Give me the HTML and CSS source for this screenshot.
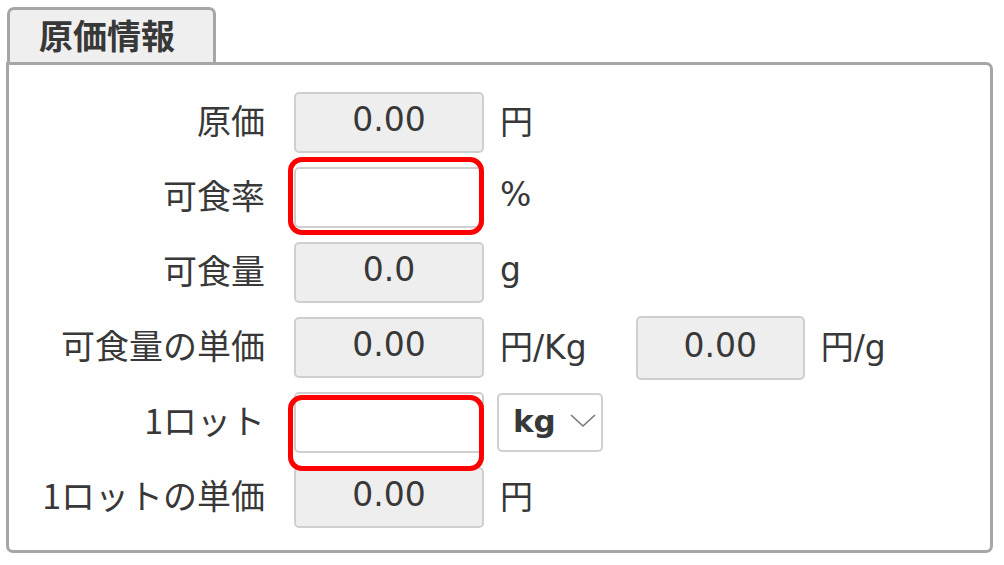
FILE: index.html
```html
<!DOCTYPE html>
<html lang="ja">
<head>
  <meta charset="UTF-8" />
  <title>原価情報</title>
  <link rel="stylesheet" href="styles.css">
</head>
<body>

  <div class="section">
    <div class="tab">原価情報</div>

    <div class="panel">
      <div class="row">
        <div class="label">原価</div>
        <div class="field readonly">0.00</div>
        <div class="unit">円</div>
      </div>

      <div class="row">
        <div class="label">可食率</div>
        <div class="field mark mark-a"></div>
        <div class="unit">%</div>
      </div>

      <div class="row">
        <div class="label">可食量</div>
        <div class="field readonly">0.0</div>
        <div class="unit">g</div>
      </div>

      <div class="row">
        <div class="label">可食量の単価</div>
        <div class="field readonly">0.00</div>
        <div class="unit">円/Kg</div>
        <div class="field readonly second">0.00</div>
        <div class="unit">円/g</div>
      </div>

      <div class="row">
        <div class="label">1ロット</div>
        <div class="field mark mark-b"></div>
        <div class="select">
          <span>kg</span>
          <svg width="26" height="14" viewBox="0 0 26 14">
            <polyline points="1,1 13,12 25,1" fill="none" stroke="#777" stroke-width="1.6"/>
          </svg>
        </div>
      </div>

      <div class="row">
        <div class="label">1ロットの単価</div>
        <div class="field readonly">0.00</div>
        <div class="unit">円</div>
      </div>
    </div>
  </div>

</body>
</html>
```

FILE: styles.css
```css
body {
  margin: 0;
  padding: 7px 0 0 6px;
  background: white;
  font-family: "DejaVu Sans", "Noto Sans CJK JP", sans-serif;
  font-size: 33px;
  color: #383838;
}

.section {
  width: 987px;
}

.tab {
  width: 209px;
  height: 55px;
  margin-left: 1px;
  padding-left: 29px;
  box-sizing: border-box;
  background: #efefef;
  border: 3px solid #a6a6a6;
  border-bottom: none;
  border-radius: 7px 7px 0 0;
  font-family: "Noto Sans CJK JP", sans-serif;
  font-weight: bold;
  font-size: 34px;
  line-height: 50px;
}

.panel {
  height: 491px;
  box-sizing: border-box;
  border: 3px solid #a6a6a6;
  border-radius: 0 7px 7px 7px;
  padding-top: 27px;
}

.row {
  display: flex;
  align-items: center;
  height: 61px;
  margin-bottom: 14px;
}

.label {
  width: 256px;
  margin-right: 29px;
  padding-bottom: 7px;
  text-align: right;
  font-family: "Noto Sans CJK JP", sans-serif;
  font-size: 34px;
}

.field {
  width: 190px;
  height: 61px;
  box-sizing: border-box;
  border: 2px solid #cfcfcf;
  border-radius: 5px;
  background: white;
  text-align: center;
  line-height: 51px;
}

.field.readonly {
  background: #eeeeee;
}

.field.second {
  width: 169px;
  margin-left: 49px;
  height: 64px;
  line-height: 55px;
}

.unit {
  margin-left: 16px;
  padding-bottom: 6px;
}

/* red highlight around the inputs to fill in */
.mark {
  position: relative;
}

.mark::after {
  content: "";
  position: absolute;
  border: 5px solid #ff0000;
  border-radius: 14px;
}

.mark-a::after {
  top: -12px;
  left: -8px;
  right: -2px;
  bottom: -9px;
}

.mark-b::after {
  top: 1px;
  left: -8px;
  right: -2px;
  bottom: -20px;
}

.select {
  display: flex;
  align-items: center;
  gap: 14px;
  width: 106px;
  height: 59px;
  margin-left: 13px;
  padding: 0 0 4px 14px;
  box-sizing: border-box;
  border: 2px solid #d0d0d0;
  border-radius: 5px;
  font-weight: bold;
  font-size: 31px;
}
```
